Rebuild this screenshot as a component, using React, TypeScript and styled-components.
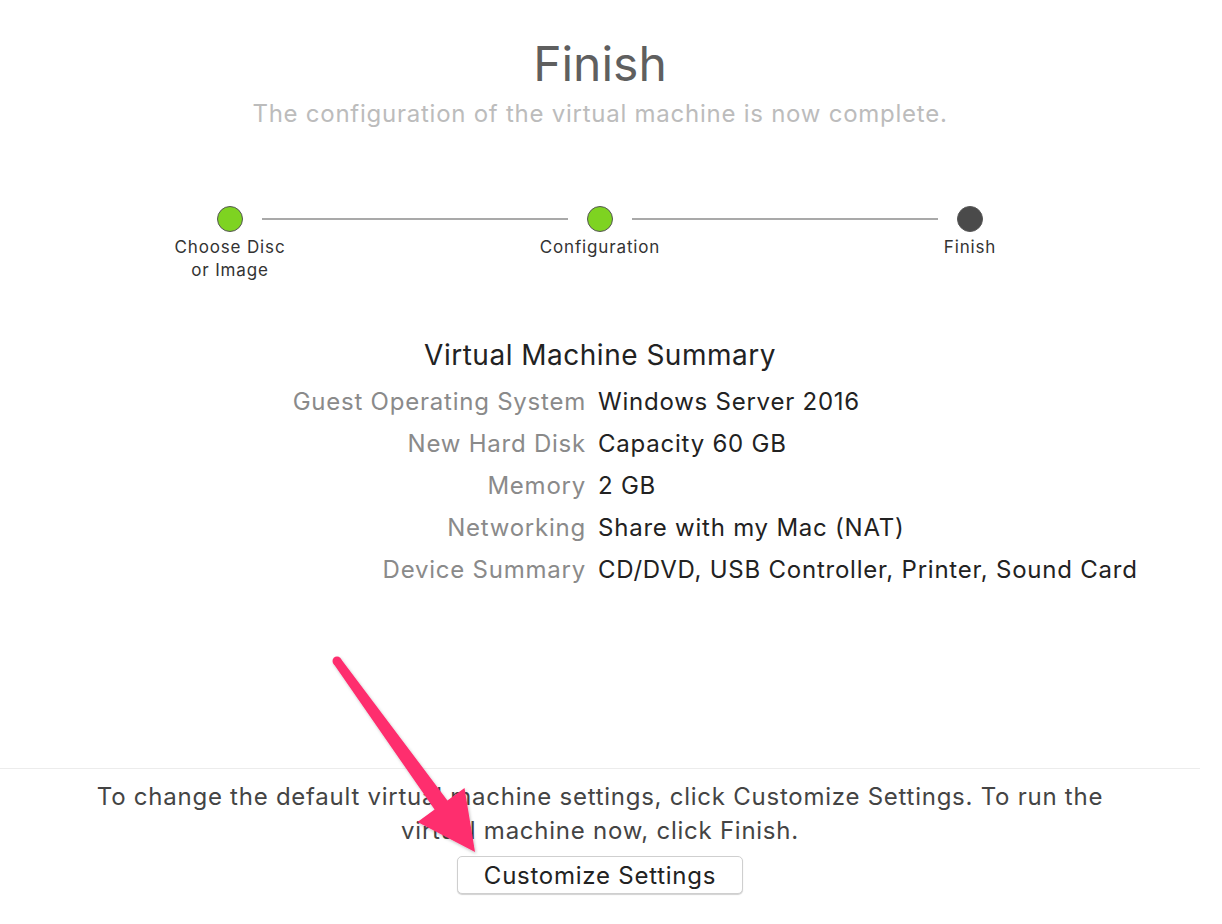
import React from "react";
import styled, { createGlobalStyle } from "styled-components";

const Global = createGlobalStyle`
  html, body { margin: 0; padding: 0; background: #ffffff; }
  body { font-family: Inter, "Noto Sans", "Liberation Sans", sans-serif; -webkit-font-smoothing: antialiased; }
`;

const Page = styled.div`
  position: relative;
  width: 1222px;
  height: 924px;
  overflow: hidden;
  background: #fff;
`;

const Content = styled.div`
  width: 1200px;
  height: 924px;
  display: flex;
  flex-direction: column;
  align-items: center;
`;

const Title = styled.h1`
  margin: 36px 0 0;
  font-size: 48px;
  line-height: 56px;
  font-weight: 400;
  color: #5f5f5f;
`;

const Subtitle = styled.p`
  margin: 7px 0 0;
  font-size: 24px;
  line-height: 30px;
  letter-spacing: 0.75px;
  color: #bcbcbc;
`;

const Stepper = styled.div`
  margin-top: 77px;
  display: grid;
  grid-template-columns: 26px 306px 26px 306px 26px;
  column-gap: 19px;
  row-gap: 4px;
  align-items: center;
`;

const Dot = styled.div<{ $done: boolean }>`
  width: 26px;
  height: 26px;
  box-sizing: border-box;
  border-radius: 50%;
  border: 1px solid #555;
  background: ${(p) => (p.$done ? "#7ed321" : "#4a4a4a")};
`;

const Line = styled.div`
  height: 2px;
  background: #a9a9a9;
`;

const StepLabel = styled.div`
  width: 26px;
  display: flex;
  justify-content: center;
  align-self: start;
  grid-row: 2;
  & > span {
    white-space: nowrap;
    text-align: center;
    font-size: 17px;
    line-height: 23px;
    color: #333;
    letter-spacing: 0.85px;
  }
`;

const SummaryTitle = styled.h2`
  margin: 56px 0 0;
  font-size: 28px;
  line-height: 34px;
  font-weight: 400;
  letter-spacing: 0.5px;
  color: #222;
`;

const SummaryGrid = styled.div`
  margin-top: 9px;
  width: 1200px;
  box-sizing: border-box;
  padding-right: 16px;
  display: grid;
  grid-template-columns: 1fr 1fr;
  column-gap: 12px;
  font-size: 24px;
  line-height: 42px;
  letter-spacing: 0.77px;
`;

const Key = styled.div`
  text-align: right;
  color: #8a8a8a;
  white-space: nowrap;
`;

const Value = styled.div`
  color: #222;
  white-space: nowrap;
`;

const Spacer = styled.div`
  flex: 1;
`;

const Footer = styled.div`
  width: 1200px;
  border-top: 1px solid #ececec;
  padding: 11px 0 30px;
  display: flex;
  flex-direction: column;
  align-items: center;
`;

const FooterText = styled.p`
  margin: 0;
  width: 1040px;
  text-align: center;
  font-size: 24px;
  line-height: 34px;
  letter-spacing: 0.75px;
  color: #444;
`;

const Button = styled.button`
  margin-top: 8px;
  height: 38px;
  padding: 0 26px;
  box-sizing: border-box;
  border: 1px solid #cfcfcf;
  border-radius: 5px;
  background: #fff;
  box-shadow: 0 1px 1px rgba(0, 0, 0, 0.18);
  font-family: inherit;
  font-size: 24px;
  letter-spacing: 0.75px;
  color: #222;
`;

const ArrowLayer = styled.svg`
  position: absolute;
  left: 0;
  top: 0;
  pointer-events: none;
`;

const steps = [
  { label: "Choose Disc\nor Image", done: true },
  { label: "Configuration", done: true },
  { label: "Finish", done: false },
];

const rows: [string, string][] = [
  ["Guest Operating System", "Windows Server 2016"],
  ["New Hard Disk", "Capacity 60 GB"],
  ["Memory", "2 GB"],
  ["Networking", "Share with my Mac (NAT)"],
  ["Device Summary", "CD/DVD, USB Controller, Printer, Sound Card"],
];

export default function App() {
  return (
    <Page>
      <Global />
      <Content>
        <Title>Finish</Title>
        <Subtitle>The configuration of the virtual machine is now complete.</Subtitle>
        <Stepper>
          {steps.map((s, i) => (
            <React.Fragment key={s.label}>
              <Dot $done={s.done} style={{ gridColumn: i * 2 + 1 }} />
              {i < steps.length - 1 && <Line style={{ gridColumn: i * 2 + 2 }} />}
            </React.Fragment>
          ))}
          {steps.map((s, i) => (
            <StepLabel key={"l" + i} style={{ gridColumn: i * 2 + 1 }}>
              <span>
                {s.label.split("\n").map((t, j) => (
                  <React.Fragment key={j}>
                    {j > 0 && <br />}
                    {t}
                  </React.Fragment>
                ))}
              </span>
            </StepLabel>
          ))}
        </Stepper>
        <SummaryTitle>Virtual Machine Summary</SummaryTitle>
        <SummaryGrid>
          {rows.map(([k, v]) => (
            <React.Fragment key={k}>
              <Key>{k}</Key>
              <Value>{v}</Value>
            </React.Fragment>
          ))}
        </SummaryGrid>
        <Spacer />
        <Footer>
          <FooterText>
            To change the default virtual machine settings, click Customize Settings. To run the virtual machine now, click Finish.
          </FooterText>
          <Button>Customize Settings</Button>
        </Footer>
      </Content>
      <ArrowLayer width="1222" height="924" viewBox="0 0 1222 924">
        <defs>
          <filter id="sh" x="-20%" y="-20%" width="140%" height="140%">
            <feDropShadow dx="1" dy="1.5" stdDeviation="1.5" floodColor="#000" floodOpacity="0.25" />
          </filter>
        </defs>
        <g filter="url(#sh)" fill="#fe2d6e">
          <circle cx="337" cy="661" r="4.5" />
          <polygon points="333.4,663.6 434.6,809.6 417.5,822 475,852 464.5,788 447.4,800.4 340.6,658.4" />
        </g>
      </ArrowLayer>
    </Page>
  );
}
